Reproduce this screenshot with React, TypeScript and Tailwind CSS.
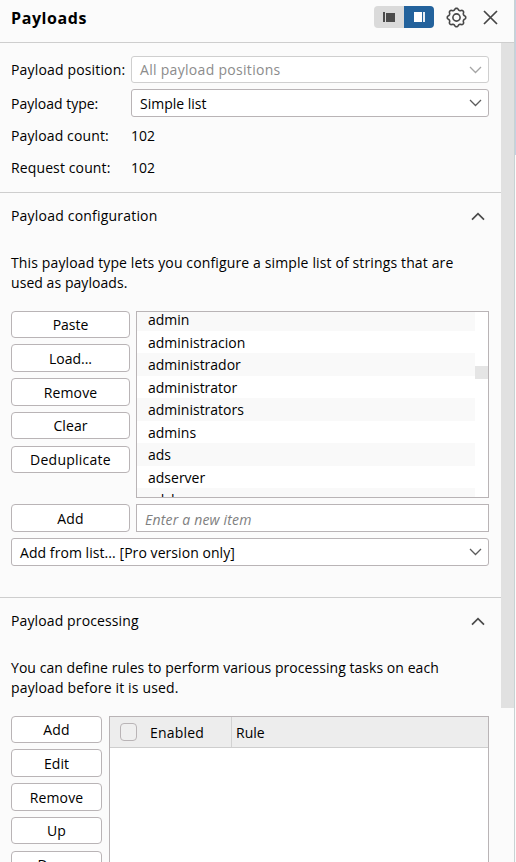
import React from 'react';

const BTN =
  'flex shrink-0 items-center justify-center rounded-[4px] border border-[#b9b4b6] bg-white leading-none';

function Button({ label, size = 'h-7', text = '' }: { label: string; size?: string; text?: string }) {
  return (
    <button className={`${BTN} ${size}`}>
      <span className={`whitespace-nowrap ${text}`}>{label}</span>
    </button>
  );
}

function ChevronDown({ color }: { color: string }) {
  return (
    <svg width="13" height="8" viewBox="0 0 13 8" fill="none" stroke={color} strokeWidth="1.3">
      <path d="M1 1 L6.5 6.5 L12 1" />
    </svg>
  );
}

function ChevronUp() {
  return (
    <svg width="14" height="9" viewBox="0 0 14 9" fill="none" stroke="#4a4a4a" strokeWidth="1.7">
      <path d="M1 7.7 L7 1.7 L13 7.7" />
    </svg>
  );
}

function Gear() {
  const points: string[] = [];
  for (let i = 0; i <= 96; i++) {
    const a = (i / 96) * Math.PI * 2;
    const r = 8.4 + 0.9 * Math.tanh(1.5 * Math.cos(a * 8));
    points.push(`${(10.5 + r * Math.sin(a)).toFixed(2)} ${(10.5 - r * Math.cos(a)).toFixed(2)}`);
  }
  return (
    <svg width="21" height="21" viewBox="0 0 21 21" fill="none" stroke="#474747" strokeWidth="1.6">
      <path d={`M${points.join(' L')} Z`} strokeLinejoin="round" />
      <circle cx="10.5" cy="10.5" r="3.6" />
    </svg>
  );
}

const ITEMS = [
  { name: 'admin', row: 'h-[19px] pb-[3px]' },
  { name: 'administracion', row: 'h-[22px] pt-px' },
  { name: 'administrador', row: 'h-[23px]' },
  { name: 'administrator', row: 'h-[22px] pt-px' },
  { name: 'administrators', row: 'h-[23px]' },
  { name: 'admins', row: 'h-[22px] pt-px' },
  { name: 'ads', row: 'h-[23px]' },
  { name: 'adserver', row: 'h-[22px] pt-px' },
  { name: 'adsl', row: 'h-[23px]' },
];

function SectionTitle({ children, text }: { children: React.ReactNode; text: string }) {
  return (
    <div className="flex h-[46px] items-center justify-between pr-[4px]">
      <span className={text}>{children}</span>
      <ChevronUp />
    </div>
  );
}

export default function App() {
  return (
    <div className="flex h-[862px] w-[516px] overflow-hidden bg-[#fbfbfb] font-['Open_Sans','Noto_Sans',sans-serif] text-[14px] leading-[20px] text-black">
      <div className="flex w-[514px] shrink-0 flex-col">
        <header className="flex h-[43px] shrink-0 items-center border-b border-[#cecece] pb-[8px] pl-[11px] pr-[16px]">
          <h1 className="grow pt-[2px] text-[16px] font-bold tracking-[0.6px]">Payloads</h1>
          <div className="flex h-[22px] w-[60px] overflow-hidden rounded-[4px]">
            <div className="flex w-[30px] items-center justify-center gap-px bg-[#dadada]">
              <i className="h-[10px] w-[2px] bg-[#4b4b4b]" />
              <i className="h-[9px] w-[9px] bg-[#4b4b4b]" />
            </div>
            <div className="flex w-[30px] items-center justify-center gap-px bg-[#23629c]">
              <i className="h-[10px] w-[8px] bg-white" />
              <i className="h-[10px] w-[2px] bg-white/90" />
            </div>
          </div>
          <span className="ml-[12px]"><Gear /></span>
          <svg className="ml-[16px]" width="15" height="15" viewBox="0 0 15 15" stroke="#454545" strokeWidth="1.7">
            <path d="M1 1 L14 14 M14 1 L1 14" />
          </svg>
        </header>

        <div className="flex min-h-0 grow">
          <main className="flex w-[501px] shrink-0 flex-col">
            <section className="flex h-[150px] shrink-0 flex-col border-b border-[#cecece] pl-[11px] pr-[12px] pt-[13px]">
              <div className="flex h-[27px] items-center">
                <span className="w-[120px] whitespace-nowrap tracking-[0.16px]">Payload position:</span>
                <div className="flex h-full grow items-center justify-between rounded-[3px] border border-[#cfcfcf] bg-white pl-[8px] pr-[6px] text-[#8c8c8c]">
                  <span className="tracking-[0.3px]">All payload positions</span>
                  <ChevronDown color="#a5a5a5" />
                </div>
              </div>
              <div className="mt-[6px] flex h-[28px] items-center">
                <span className="w-[120px] pt-[2px]">Payload type:</span>
                <div className="flex h-full grow items-center justify-between rounded-[3px] border border-[#b9b4b6] bg-white pl-[8px] pr-[6px]">
                  <span className="pt-[2px]">Simple list</span>
                  <ChevronDown color="#5c5c5c" />
                </div>
              </div>
              <div className="mt-[3px] flex h-[32px] items-center">
                <span className="w-[120px] tracking-[0.12px]">Payload count:</span>
                <span>102</span>
              </div>
              <div className="flex h-[32px] items-center">
                <span className="w-[120px] tracking-[0.12px]">Request count:</span>
                <span>102</span>
              </div>
            </section>

            <section className="flex h-[405px] shrink-0 flex-col border-b border-[#cecece] pl-[11px] pr-[12px]">
              <SectionTitle text="tracking-[0.2px]">Payload configuration</SectionTitle>
              <p className="mt-[14px] h-[58px] shrink-0 whitespace-nowrap">
                <span className="tracking-[0.13px]">
                  This payload type lets you configure a simple list of strings that are
                </span>
                <br />
                <span className="tracking-[0.06px]">used as payloads.</span>
              </p>
              <div className="flex h-[187px] shrink-0 gap-[6px]">
                <div className="flex w-[119px] shrink-0 flex-col">
                  <Button label="Paste" size="h-[27px]" />
                  <Button label="Load..." size="mt-[6px] h-[28px]" text="pt-[2px]" />
                  <Button label="Remove" size="mt-[6px] h-[28px]" text="pt-[2px] tracking-[0.15px]" />
                  <Button label="Clear" size="mt-[6px] h-[27px]" text="tracking-[0.1px]" />
                  <Button label="Deduplicate" size="mt-[7px] h-[27px]" text="tracking-[0.25px]" />
                </div>
                <div className="flex grow overflow-hidden border border-[#b9b4b6] bg-white">
                  <ul className="grow">
                    {ITEMS.map((item) => (
                      <li key={item.name} className={`flex items-center pl-[11px] odd:bg-[#f9f9f9] ${item.row}`}>
                        {item.name}
                      </li>
                    ))}
                  </ul>
                  <div className="w-[13px] pt-[54px]">
                    <div className="h-[13px] bg-[#e5e5e5]" />
                  </div>
                </div>
              </div>
              <div className="mt-[6px] flex h-[28px] gap-[6px]">
                <Button label="Add" size="h-[28px] w-[119px]" text="pt-[2px] tracking-[0.2px]" />
                <div className="flex grow items-center border border-[#b9b4b6] bg-white pl-[8px] pt-[3px] italic text-[#808080]">
                  <span className="tracking-[0.19px]">Enter a new item</span>
                </div>
              </div>
              <div className="mt-[6px] flex h-[28px] items-center justify-between rounded-[3px] border border-[#b9b4b6] bg-white pl-[8px] pr-[6px]">
                <span className="pt-[2px] tracking-[0.06px]">Add from list... [Pro version only]</span>
                <ChevronDown color="#5c5c5c" />
              </div>
            </section>

            <section className="flex flex-col pl-[11px] pr-[12px]">
              <SectionTitle text="tracking-[0.12px]">Payload processing</SectionTitle>
              <p className="mt-[14px] h-[58px] shrink-0 whitespace-nowrap">
                <span className="tracking-[0.05px]">
                  You can define rules to perform various processing tasks on each
                </span>
                <br />
                <span className="tracking-[0.16px]">payload before it is used.</span>
              </p>
              <div className="flex h-[180px] shrink-0 gap-[7px]">
                <div className="flex w-[91px] shrink-0 flex-col">
                  <Button label="Add" size="h-[27px]" text="tracking-[0.2px]" />
                  <Button label="Edit" size="mt-[6px] h-[28px]" text="pt-[2px]" />
                  <Button label="Remove" size="mt-[6px] h-[28px]" text="pt-[2px] tracking-[0.15px]" />
                  <Button label="Up" size="mt-[6px] h-[27px]" text="tracking-[0.2px]" />
                  <Button label="Down" size="mt-[7px] h-[27px]" />
                </div>
                <div className="grow border border-[#b9b4b6] bg-white">
                  <div className="flex h-[31px] border-b border-[#cecece] bg-[#ededed]">
                    <div className="flex w-[122px] items-center border-r border-[#d2d2d2] pl-[10px]">
                      <i className="h-[18px] w-[17px] rounded-[4px] border border-[#b9b4b6] bg-[#efefef]" />
                      <span className="ml-[13px] pt-[2px] tracking-[0.2px]">Enabled</span>
                    </div>
                    <span className="self-center pl-[4px] pt-[2px]">Rule</span>
                  </div>
                </div>
              </div>
            </section>
          </main>
          <div className="w-[13px]">
            <div className="h-[665px] bg-[#e1e1e1]" />
          </div>
        </div>
      </div>
      <div className="w-[2px] border-l border-[#c8d3d3]">
        <div className="h-[155px] bg-[#c5d1e2]" />
      </div>
    </div>
  );
}
